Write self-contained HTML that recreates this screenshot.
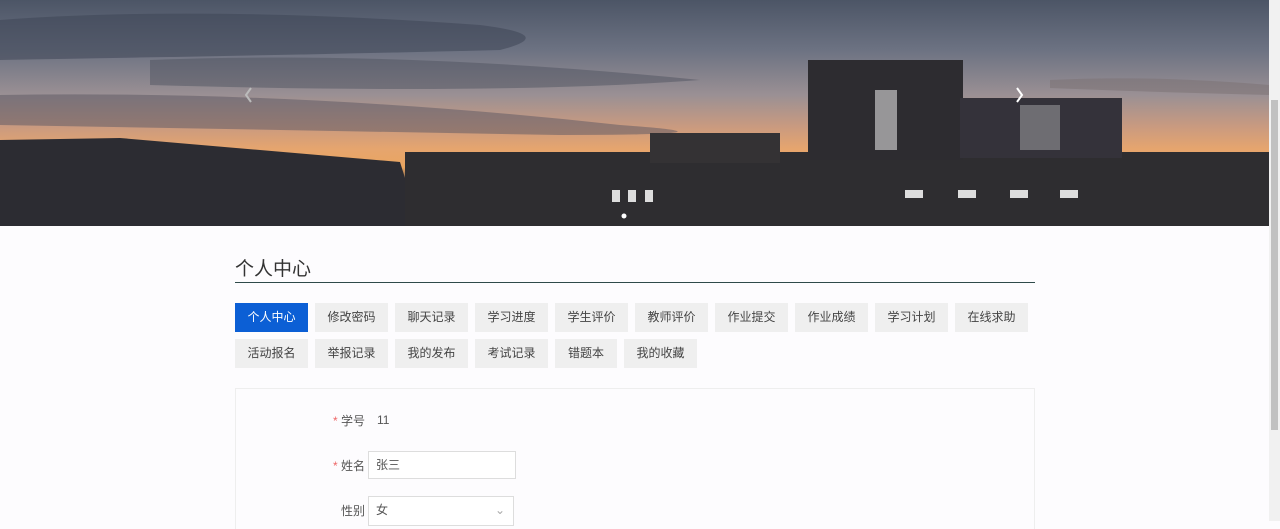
<!DOCTYPE html>
<html><head><meta charset="utf-8"><style>
body{margin:0;width:1280px;height:521px;overflow:hidden;background:#fdfcfe;font-family:"Liberation Sans","Noto Sans CJK SC",sans-serif;position:relative}
.banner{position:absolute;left:0;top:0;width:1269px;height:226px;overflow:hidden;background:linear-gradient(180deg,#4c5566 0%,#6c7282 22%,#9a9094 42%,#c99a80 56%,#e6a56e 66%,#e9a560 74%,#4a4446 82%,#2a2a2e 100%)}
.sb{position:absolute;left:1269px;top:0;width:11px;height:521px;background:#f1f1f1}
.sb i{position:absolute;left:2px;top:100px;width:7px;height:330px;background:#c1c1c1}
h2{position:absolute;left:235px;top:254px;margin:0;font-size:19px;font-weight:normal;color:#333}
.line{position:absolute;left:235px;top:282px;width:800px;height:1px;background:#2f4a4a}
.b{position:absolute;width:73px;height:29px;line-height:29px;text-align:center;font-size:12px;color:#444;background:#efefef}
.b.a{background:#0c5fd5;color:#fff}
.box{position:absolute;left:235px;top:388px;width:798px;height:140px;border:1px solid #eee;border-bottom:none}
.l{position:absolute;font-size:12px;color:#555}
.l s{color:#e66;text-decoration:none}
.in{position:absolute;border:1px solid #ddd;background:#fff;font-size:12px;color:#555;box-sizing:border-box;padding-left:7px}
</style></head><body>
<div class="banner">
<svg width="1269" height="226" style="position:absolute;left:0;top:0">
<path d="M0 20 Q200 5 480 25 Q560 35 500 50 Q300 55 0 60Z" fill="#3e4656" opacity=".55"/>
<path d="M150 60 Q400 50 700 80 Q500 95 150 85Z" fill="#4a4e5c" opacity=".45"/>
<path d="M0 95 Q300 90 620 125 Q760 135 560 135 L0 125Z" fill="#5a5562" opacity=".5"/>
<path d="M1050 80 Q1150 75 1269 85 L1269 95 Q1150 92 1050 88Z" fill="#7a6f72" opacity=".5"/>
<path d="M0 140 L120 138 L260 150 L400 162 L420 226 L0 226Z" fill="#2c2c32"/>
<rect x="405" y="152" width="864" height="74" fill="#2e2d30"/>
<rect x="650" y="133" width="130" height="30" fill="#343234"/>
<rect x="808" y="60" width="155" height="100" fill="#2d2c30"/>
<rect x="960" y="98" width="162" height="60" fill="#34323a"/>
<g fill="#ddd"><rect x="612" y="190" width="8" height="12"/><rect x="628" y="190" width="8" height="12"/><rect x="645" y="190" width="8" height="12"/><rect x="875" y="90" width="22" height="60" opacity=".6"/><rect x="905" y="190" width="18" height="8"/><rect x="958" y="190" width="18" height="8"/><rect x="1010" y="190" width="18" height="8"/><rect x="1060" y="190" width="18" height="8"/><rect x="1020" y="105" width="40" height="45" opacity=".35"/></g>
<path d="M246 88 L251 95 L246 102" stroke="#bbb" stroke-width="2" fill="none" transform="rotate(180 248.5 95)"/>
<path d="M1017 88 L1022 95 L1017 102" stroke="#fff" stroke-width="2" fill="none"/>
<circle cx="624" cy="216" r="2.5" fill="#fff"/>
</svg>
</div>
<div class="sb"><i></i></div>
<h2>个人中心</h2><div class="line"></div>
<div class="b a" style="left:235px;top:303px">个人中心</div>
<div class="b" style="left:315px;top:303px">修改密码</div>
<div class="b" style="left:395px;top:303px">聊天记录</div>
<div class="b" style="left:475px;top:303px">学习进度</div>
<div class="b" style="left:555px;top:303px">学生评价</div>
<div class="b" style="left:635px;top:303px">教师评价</div>
<div class="b" style="left:715px;top:303px">作业提交</div>
<div class="b" style="left:795px;top:303px">作业成绩</div>
<div class="b" style="left:875px;top:303px">学习计划</div>
<div class="b" style="left:955px;top:303px">在线求助</div>
<div class="b" style="left:235px;top:339px">活动报名</div>
<div class="b" style="left:315px;top:339px">举报记录</div>
<div class="b" style="left:395px;top:339px">我的发布</div>
<div class="b" style="left:475px;top:339px">考试记录</div>
<div class="b" style="left:555px;top:339px;width:62px">错题本</div>
<div class="b" style="left:624px;top:339px">我的收藏</div>
<div class="box"></div>
<div class="l" style="left:333px;top:412px"><s>*</s> 学号</div>
<div class="l" style="left:377px;top:413px">11</div>
<div class="l" style="left:333px;top:457px"><s>*</s> 姓名</div>
<div class="in" style="left:368px;top:451px;width:148px;height:28px;line-height:26px">张三</div>
<div class="l" style="left:341px;top:502px">性别</div>
<div class="in" style="left:368px;top:496px;width:146px;height:30px;line-height:26px">女<span style="position:absolute;right:8px;top:0;color:#aaa">&#8964;</span></div>
</body></html>
